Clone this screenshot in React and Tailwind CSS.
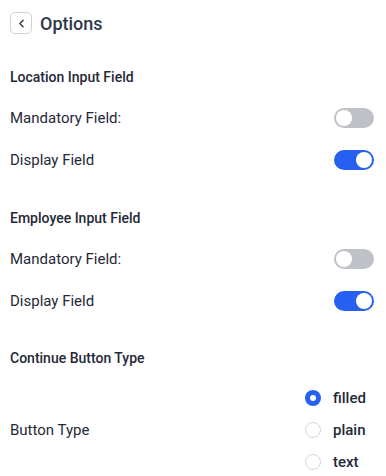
import React, { useState } from "react";
import { ChevronLeft } from "lucide-react";

const Toggle = ({ on, onChange }) => (
  <button
    type="button"
    onClick={onChange}
    className={`relative w-10 h-5 rounded-full transition-colors ${
      on ? "bg-[#2660f0]" : "bg-[#bec2c6]"
    }`}
  >
    <span
      className={`absolute top-[2px] w-4 h-4 rounded-full bg-white transition-all ${
        on ? "left-[22px]" : "left-[2px]"
      }`}
    />
  </button>
);

const Row = ({ label, on, onChange }) => (
  <div className="h-[42px] flex items-center justify-between pr-[2px]">
    <span className="text-[15px] text-[#1f2937]">{label}</span>
    <Toggle on={on} onChange={onChange} />
  </div>
);

const Radio = ({ label, checked, onClick }) => (
  <button
    type="button"
    onClick={onClick}
    className="h-8 flex items-center gap-[12px]"
  >
    {checked ? (
      <span className="w-4 h-4 rounded-full bg-[#2660f0] flex items-center justify-center">
        <span className="w-[6px] h-[6px] rounded-full bg-white" />
      </span>
    ) : (
      <span className="w-4 h-4 rounded-full border border-[#d4d6d9] bg-white" />
    )}
    <span className="text-[15px] font-medium text-[#1f2937]">{label}</span>
  </button>
);

export default function App() {
  const [loc, setLoc] = useState({ mandatory: false, display: true });
  const [emp, setEmp] = useState({ mandatory: false, display: true });
  const [type, setType] = useState("filled");

  return (
    <div className="w-[386px] h-[476px] overflow-hidden bg-white px-[10px] font-['Roboto',sans-serif]">
      {/* Header */}
      <div className="mt-3 h-[22px] flex items-center gap-2">
        <button
          type="button"
          className="w-[22px] h-[22px] rounded-[5px] border border-[#cfd3d8] flex items-center justify-center text-[#2d3748]"
        >
          <ChevronLeft size={13} strokeWidth={2.5} />
        </button>
        <h1 className="text-[18px] font-medium text-[#2d3748]">Options</h1>
      </div>

      {/* Location */}
      <h2 className="mt-[33px] h-5 leading-5 text-[14px] font-medium text-[#1f2937]">
        Location Input Field
      </h2>
      <div className="mt-[10px]">
        <Row
          label="Mandatory Field:"
          on={loc.mandatory}
          onChange={() => setLoc({ ...loc, mandatory: !loc.mandatory })}
        />
        <Row
          label="Display Field"
          on={loc.display}
          onChange={() => setLoc({ ...loc, display: !loc.display })}
        />
      </div>

      {/* Employee */}
      <h2 className="mt-[27px] h-5 leading-5 text-[14px] font-medium text-[#1f2937]">
        Employee Input Field
      </h2>
      <div className="mt-[10px]">
        <Row
          label="Mandatory Field:"
          on={emp.mandatory}
          onChange={() => setEmp({ ...emp, mandatory: !emp.mandatory })}
        />
        <Row
          label="Display Field"
          on={emp.display}
          onChange={() => setEmp({ ...emp, display: !emp.display })}
        />
      </div>

      {/* Continue button */}
      <h2 className="mt-[26px] h-5 leading-5 text-[14px] font-medium text-[#1f2937]">
        Continue Button Type
      </h2>
      <div className="mt-[14px] flex items-center">
        <span className="w-[295px] text-[15px] text-[#1f2937]">Button Type</span>
        <div className="flex flex-col items-start">
          {["filled", "plain", "text"].map((t) => (
            <Radio
              key={t}
              label={t}
              checked={type === t}
              onClick={() => setType(t)}
            />
          ))}
        </div>
      </div>
    </div>
  );
}
